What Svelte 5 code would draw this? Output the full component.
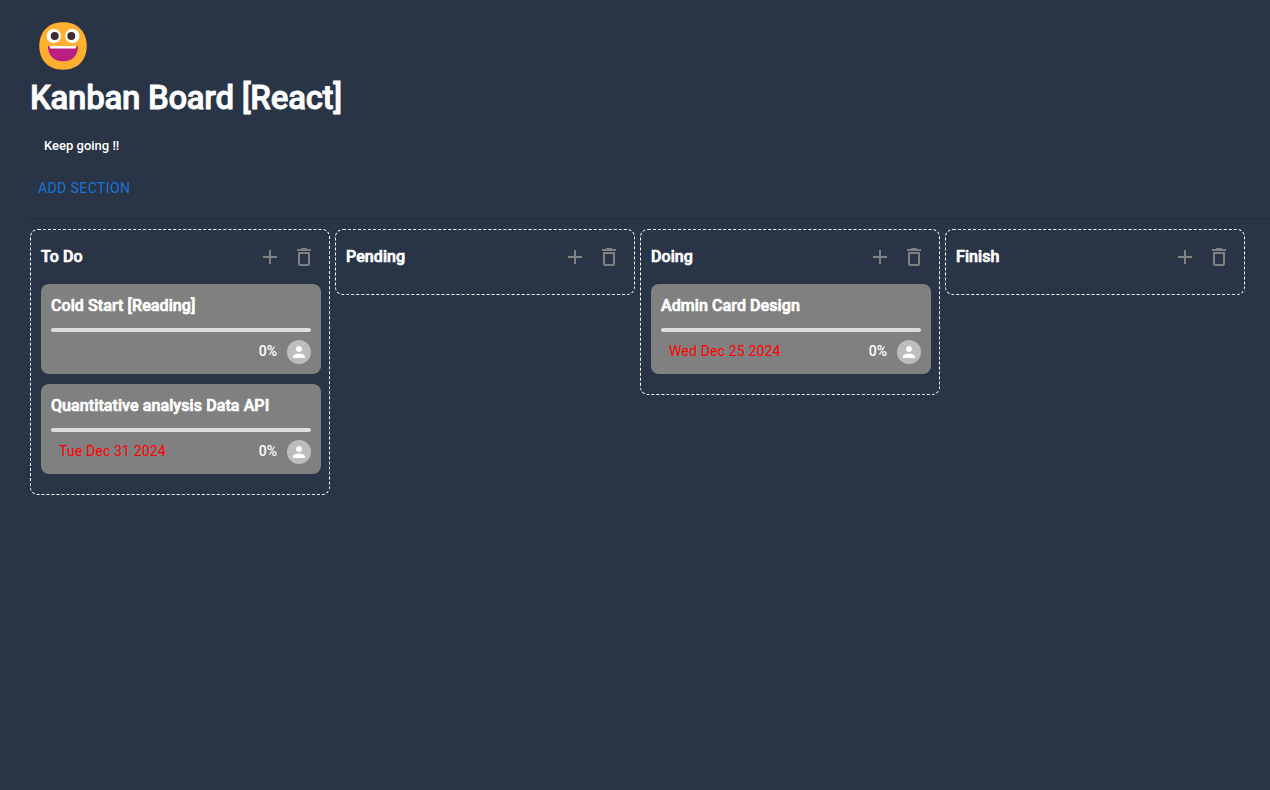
<script>
  const sections = [
    {
      title: 'To Do',
      cards: [
        { title: 'Cold Start [Reading]', due: '', progress: 0 },
        { title: 'Quantitative analysis Data API', due: 'Tue Dec 31 2024', progress: 0 }
      ]
    },
    { title: 'Pending', cards: [] },
    { title: 'Doing', cards: [{ title: 'Admin Card Design', due: 'Wed Dec 25 2024', progress: 0 }] },
    { title: 'Finish', cards: [] }
  ];
</script>

<main>
  <svg class="emoji" viewBox="0 0 48 48" aria-hidden="true">
    <path fill="#ffb02e" d="M24 47.700C39.800 47.700 47.700 37.100 47.700 24S39.800.3 24 .3.3 10.900.3 24 8.200 47.700 24 47.700z" />
    <circle cx="14.700" cy="14" r="7.200" fill="#fff" />
    <circle cx="33.300" cy="14" r="7.200" fill="#fff" />
    <circle cx="15.700" cy="14" r="4" fill="#402a32" />
    <circle cx="32.300" cy="14" r="4" fill="#402a32" />
    <path fill="#bb1d80" d="M9 24h30c0 9.500-5.500 15.300-15 15.300S9 33.500 9 24z" />
    <path fill="#fff" d="M10.700 24h26.600v1q0 1.500-1.300 1.500H12q-1.300 0-1.300-1.500z" />
  </svg>
  <h1>Kanban Board [React]</h1>
  <p class="description">Keep going !!</p>
  <button class="add">Add section</button>
  <hr />
  <div class="board">
    {#each sections as section}
      <section>
        <header>
          <h2>{section.title}</h2>
          <button class="icon" aria-label="Add card">
            <svg viewBox="0 0 24 24"><path d="M19 13h-6v6h-2v-6H5v-2h6V5h2v6h6v2z" /></svg>
          </button>
          <button class="icon" aria-label="Delete section">
            <svg viewBox="0 0 24 24"><path d="M6 19c0 1.100.9 2 2 2h8c1.100 0 2-.9 2-2V7H6v12zM8 9h8v10H8V9zm7.500-5-1-1h-5l-1 1H5v2h14V4h-3.500z" /></svg>
          </button>
        </header>
        {#each section.cards as card}
          <article>
            <h3>{card.title}</h3>
            <div class="track"><div class="bar" style="width: {card.progress}%"></div></div>
            <footer>
              <span class="due">{card.due}</span>
              <span class="percent">{card.progress}%</span>
              <span class="avatar">
                <svg viewBox="0 0 24 24"><path d="M12 12c2.210 0 4-1.790 4-4s-1.790-4-4-4-4 1.790-4 4 1.790 4 4 4zm0 2c-2.670 0-8 1.340-8 4v2h16v-2c0-2.660-5.330-4-8-4z" /></svg>
              </span>
            </footer>
          </article>
        {/each}
      </section>
    {/each}
  </div>
</main>

<style>
  :global(body) {
    margin: 0;
    background: #2a3447;
    overflow: hidden;
  }
  main {
    box-sizing: border-box;
    width: 1270px;
    height: 790px;
    padding: 22px 0 0 30px;
    background: #2a3447;
    color: #fff;
    font-family: Roboto, sans-serif;
  }
  .emoji {
    display: block;
    width: 48px;
    height: 48px;
    margin-left: 9px;
  }
  h1, h2, h3, p {
    margin: 0;
  }
  h1, h2, h3 {
    font-weight: 500;
  }
  h1 {
    font-size: 33px;
    line-height: 56px;
    letter-spacing: -0.29px;
    -webkit-text-stroke: 0.8px #fff;
  }
  .description {
    height: 42px;
    padding-left: 14px;
    font-size: 13px;
    font-weight: 500;
    line-height: 40px;
  }
  button {
    border: 0;
    background: none;
    font: inherit;
    cursor: pointer;
  }
  .add {
    display: block;
    padding: 6px 8px;
    margin-top: 2px;
    color: #1976d2;
    font-size: 14px;
    line-height: 24px;
    letter-spacing: 0.4px;
    text-transform: uppercase;
  }
  hr {
    margin: 12px 0 10px;
    border: 0;
    border-top: 1px solid rgba(0, 0, 0, 0.12);
  }
  .board {
    display: flex;
    align-items: flex-start;
    gap: 5px;
  }
  section {
    box-sizing: border-box;
    width: 300px;
    padding: 0 10px 10px;
    border: 1px dashed #fff;
    border-radius: 8px;
  }
  header {
    display: flex;
    align-items: center;
    width: 280px;
    height: 54px;
  }
  h2 {
    flex: 1;
    font-size: 16px;
    line-height: 24px;
    letter-spacing: 0.08px;
    -webkit-text-stroke: 0.7px #fff;
  }
  .icon {
    display: flex;
    padding: 5px;
  }
  .icon svg {
    width: 24px;
    height: 24px;
    fill: #808080;
  }
  article {
    box-sizing: border-box;
    width: 280px;
    height: 90px;
    margin-bottom: 10px;
    padding: 10px;
    border-radius: 8px;
    background: #808080;
  }
  h3 {
    height: 34px;
    font-size: 16px;
    line-height: 24px;
    letter-spacing: 0.09px;
    -webkit-text-stroke: 0.7px #fff;
  }
  .track {
    height: 4px;
    border-radius: 2px;
    background: #ddd;
    overflow: hidden;
  }
  .bar {
    height: 100%;
    background: #1976d2;
  }
  footer {
    display: flex;
    height: 24px;
    margin-top: 8px;
    font-size: 14px;
    line-height: 22px;
  }
  .due {
    flex: 1;
    padding-left: 8px;
    color: #f00;
    letter-spacing: 0.16px;
  }
  .percent {
    margin-right: 10px;
    font-size: 14px;
    font-weight: 500;
  }
  .avatar {
    display: grid;
    place-items: center;
    width: 24px;
    height: 24px;
    border-radius: 50%;
    background: #bdbdbd;
  }
  .avatar svg {
    width: 18px;
    height: 18px;
    fill: #fff;
  }
</style>
